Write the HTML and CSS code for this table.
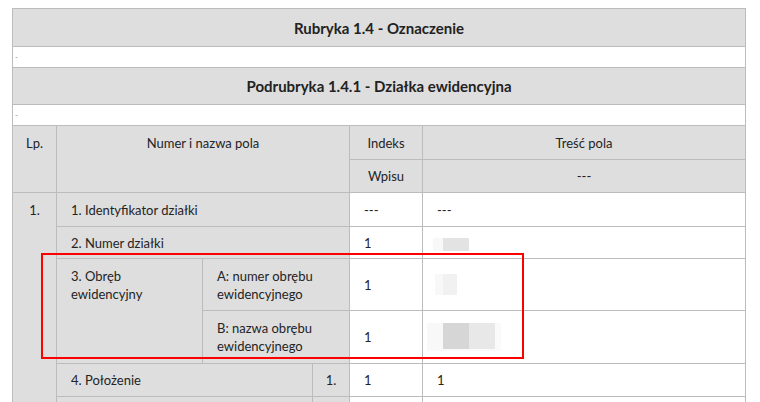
FILE: index.html
```html
<!DOCTYPE html>
<html lang="pl">
<head>
<meta charset="utf-8">
<title>Rubryka 1.4 - Oznaczenie</title>
<link rel="stylesheet" href="styles.css">
</head>
<body>
<div class="wrap">
<table class="kw">
  <colgroup>
    <col class="c-lp"><col class="c-b"><col class="c-c"><col class="c-d"><col class="c-idx"><col class="c-tr">
  </colgroup>
  <tr class="h-rub"><th colspan="6" class="title">Rubryka 1.4 - Oznaczenie</th></tr>
  <tr class="h-dash"><td colspan="6" class="dash">-</td></tr>
  <tr class="h-pod"><th colspan="6" class="title">Podrubryka 1.4.1 - Działka ewidencyjna</th></tr>
  <tr class="h-dash2"><td colspan="6" class="dash">-</td></tr>
  <tr class="h-head1">
    <td rowspan="2" class="g top center">Lp.</td>
    <td rowspan="2" colspan="3" class="g top center">Numer i nazwa pola</td>
    <td class="g center">Indeks</td>
    <td class="g center">Treść pola</td>
  </tr>
  <tr class="h-head2">
    <td class="g center">Wpisu</td>
    <td class="g center">---</td>
  </tr>
  <tr class="h-r1">
    <td rowspan="6" class="g top center lp">1.</td>
    <td colspan="3" class="g">1. Identyfikator działki</td>
    <td class="w">---</td>
    <td class="w">---</td>
  </tr>
  <tr class="h-r2">
    <td colspan="3" class="g">2. Numer działki</td>
    <td class="w">1</td>
    <td class="w"><span class="blur blur-a"></span></td>
  </tr>
  <tr class="h-r3a">
    <td rowspan="2" class="g top">3. Obręb<br>ewidencyjny</td>
    <td colspan="2" class="g">A: numer obrębu<br>ewidencyjnego</td>
    <td class="w">1</td>
    <td class="w"><span class="blur blur-b"></span></td>
  </tr>
  <tr class="h-r3b">
    <td colspan="2" class="g">B: nazwa obrębu<br>ewidencyjnego</td>
    <td class="w">1</td>
    <td class="w"><span class="blur blur-c"></span></td>
  </tr>
  <tr class="h-r4">
    <td colspan="2" class="g">4. Położenie</td>
    <td class="g center">1.</td>
    <td class="w">1</td>
    <td class="w">1</td>
  </tr>
  <tr class="h-r5">
    <td colspan="2" class="g"></td>
    <td class="g"></td>
    <td class="w"></td>
    <td class="w"></td>
  </tr>
</table>
<div class="mark"></div>
</div>
</body>
</html>
```
FILE: styles.css
```css
html, body {
  background: #ffffff;
}
body {
  margin: 8px 0 0 12px;
  font-family: Lato, "Open Sans", Arial, sans-serif;
  color: #242424;
  overflow: hidden;
}
.wrap {
  position: relative;
  width: 734px;
}
.kw {
  width: 734px;
  table-layout: fixed;
  border-collapse: collapse;
  font-size: 13px;
  line-height: 18px;
}
.c-lp { width: 44px; }
.c-b { width: 146px; }
.c-c { width: 110px; }
.c-d { width: 37px; }
.c-idx { width: 73px; }
.c-tr { width: 323px; }

.kw th, .kw td {
  border: 1px solid #bcbcbc;
  padding: 0 14px;
  vertical-align: middle;
  text-align: left;
}
.kw th.title {
  background: #dedede;
  font-size: 15px;
  font-weight: 700;
  text-align: center;
  color: #222222;
}
.kw td.dash {
  padding: 0 2px;
  font-size: 8px;
  color: #8a8a8a;
  background: #fff;
}
.g { background: #dedede; }
.w { background: #ffffff; }
.kw td.center { text-align: center; padding-left: 4px; padding-right: 4px; }
.kw td.top { vertical-align: top; padding-top: 8px; }
.kw td.lp { padding-top: 8px; }

.h-rub { height: 38px; }
.h-dash { height: 21px; }
.h-pod { height: 37px; }
.h-dash2 { height: 21px; }
.h-head1 { height: 34px; }
.h-head2 { height: 33px; }
.h-r1 { height: 34px; }
.h-r2 { height: 32px; }
.h-r3a { height: 52px; }
.h-r3b { height: 53px; }
.h-r4 { height: 33px; }
.h-r5 { height: 34px; }

.blur {
  display: inline-block;
  vertical-align: middle;
}
.blur-a {
  width: 36px;
  height: 13px;
  margin-left: -4px;
  background: linear-gradient(to right, #f8f8f8 0 10px, #e3e3e3 10px 36px);
}
.blur-b {
  width: 22px;
  height: 21px;
  margin-left: -2px;
  background: linear-gradient(to right, #f8f8f8 0 8px, #f1f1f1 8px 22px);
}
.blur-c {
  width: 74px;
  height: 28px;
  margin-left: -10px;
  background:
    linear-gradient(to right, #f8f8f8 0 16px, #d6d6d6 16px 42px, #e8e8e8 42px 68px, #fafafa 68px 74px) top / 100% 26px no-repeat,
    #fafafa;
}

.mark {
  position: absolute;
  left: 29px;
  top: 245px;
  width: 479px;
  height: 102px;
  border: 2px solid #ff0000;
  pointer-events: none;
}
```
